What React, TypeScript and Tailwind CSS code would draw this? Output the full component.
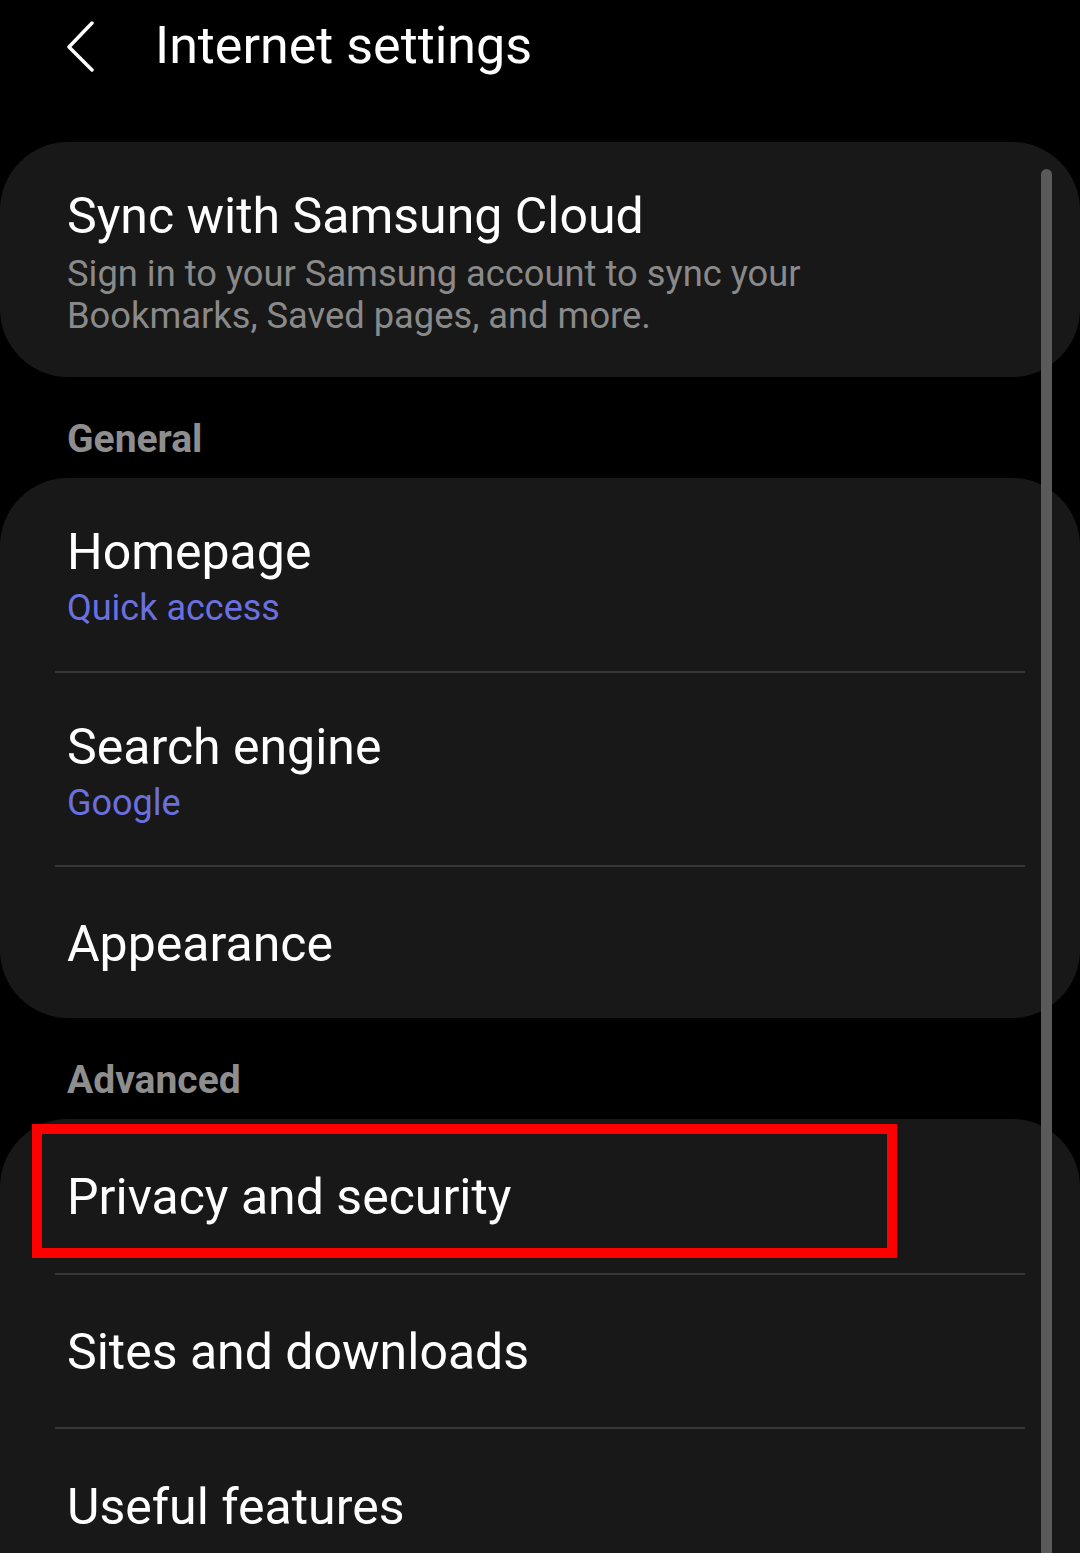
import React from "react";

const font = { fontFamily: "Roboto, 'Noto Sans', sans-serif" };

function Divider() {
  return <div className="mx-[55px] h-[2px] bg-[#373737]" />;
}

function Row({
  title,
  sub,
  h,
  children,
}: {
  title: string;
  sub?: string;
  h: string;
  children?: React.ReactNode;
}) {
  return (
    <div className={`relative flex flex-col justify-center pl-[67px] ${h}`}>
      {children}
      <div className="mt-[2px] text-[50px] leading-[60px] text-white">{title}</div>
      {sub && (
        <div className="mt-[5px] text-[36px] leading-[42px] text-[#6b70e0]">{sub}</div>
      )}
    </div>
  );
}

function Section({ label }: { label: string }) {
  return (
    <div className="h-[101px] pl-[67px] pt-[40px]">
      <div className="text-[39px] leading-[44px] font-bold text-[#8e8e8e]">{label}</div>
    </div>
  );
}

export default function App() {
  return (
    <div className="relative w-[1080px] h-[1553px] overflow-hidden bg-black" style={font}>
      {/* Header */}
      <div className="flex items-center h-[92px]">
        <div className="w-[155px] flex pl-[67px]">
          <svg width="30" height="52" viewBox="0 0 30 52">
            <path
              d="M25 3 L2 27 L25 50"
              fill="none"
              stroke="#ffffff"
              strokeWidth="3.5"
              strokeLinecap="round"
              strokeLinejoin="round"
            />
          </svg>
        </div>
        <div className="text-[52px] leading-[60px] text-white">Internet settings</div>
      </div>

      <div className="mt-[50px]">
        {/* Card 1 */}
        <div className="h-[235px] rounded-[68px] bg-[#181818] pl-[67px] pt-[44px]">
          <div className="text-[50px] leading-[60px] text-white">Sync with Samsung Cloud</div>
          <div className="mt-[7px] text-[36.3px] leading-[42px] text-[#8a8a8a]">
            Sign in to your Samsung account to sync your
            <br />
            Bookmarks, Saved pages, and more.
          </div>
        </div>

        <Section label="General" />

        {/* Card 2 */}
        <div className="rounded-[68px] bg-[#181818]">
          <Row title="Homepage" sub="Quick access" h="h-[193px]" />
          <Divider />
          <Row title="Search engine" sub="Google" h="h-[192px]" />
          <Divider />
          <Row title="Appearance" h="h-[151px]" />
        </div>

        <Section label="Advanced" />

        {/* Card 3 */}
        <div className="rounded-t-[68px] bg-[#181818] h-[500px]">
          <Row title="Privacy and security" h="h-[154px]">
            <div className="absolute left-[32px] top-[5px] w-[865px] h-[134px] border-[10px] border-[#ff0000]" />
          </Row>
          <Divider />
          <Row title="Sites and downloads" h="h-[152px]" />
          <Divider />
          <Row title="Useful features" h="h-[154px]" />
        </div>
      </div>

      {/* Scrollbar */}
      <div className="absolute left-[1041px] top-[169px] w-[11px] h-[1400px] rounded-full bg-[#5a5a5a]" />
    </div>
  );
}
